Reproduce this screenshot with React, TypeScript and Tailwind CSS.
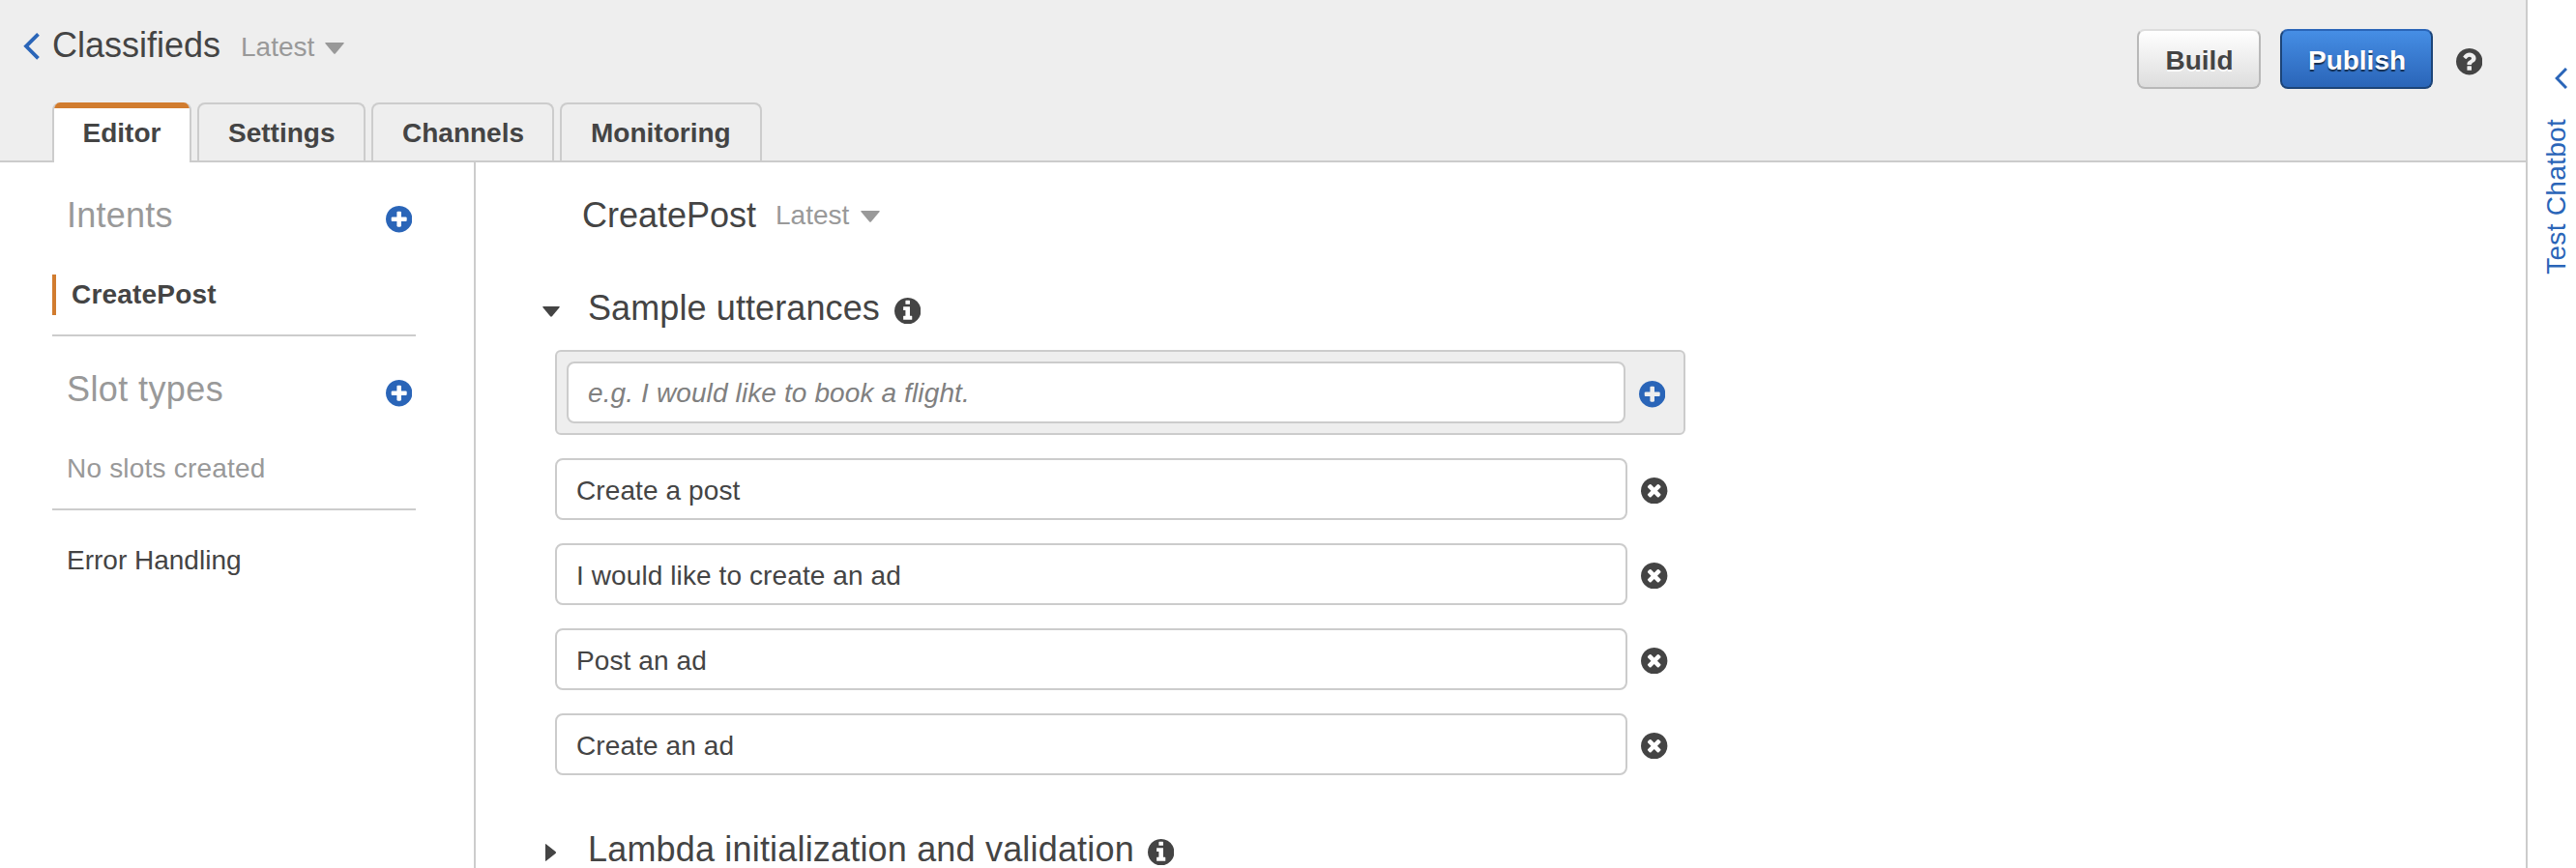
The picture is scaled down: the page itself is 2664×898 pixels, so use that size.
import React from "react";

const RING =
  "q0 209-103 385.5t-279.5 279.5-385.5 103-385.5-103-279.5-279.5-103-385.5 103-385.5 279.5-279.5 385.5-103 385.5 103 279.5 279.5 103 385.5z";

const GLYPHS = {
  plus:
    "M1344 960v-128q0-26-19-45t-45-19h-256v-256q0-26-19-45t-45-19h-128q-26 0-45 19t-19 45v256h-256q-26 0-45 19t-19 45v128q0 26 19 45t45 19h256v256q0 26 19 45t45 19h128q26 0 45-19t19-45v-256h256q26 0 45-19t19-45zm320-64" +
    RING,
  times:
    "M1277 1122q0-26-19-45l-181-181 181-181q19-19 19-45 0-27-19-46l-90-90q-19-19-46-19-26 0-45 19l-181 181-181-181q-19-19-45-19-27 0-46 19l-90 90q-19 19-19 46 0 26 19 45l181 181-181 181q-19 19-19 45 0 27 19 46l90 90q19 19 46 19 26 0 45-19l181-181 181 181q19 19 45 19 27 0 46-19l90-90q19-19 19-46zm387-226" +
    RING,
  info:
    "M1152 1376v-160q0-14-9-23t-23-9h-96v-512q0-14-9-23t-23-9h-320q-14 0-23 9t-9 23v160q0 14 9 23t23 9h96v320h-96q-14 0-23 9t-9 23v160q0 14 9 23t23 9h448q14 0 23-9t9-23zm-128-896v-160q0-14-9-23t-23-9h-192q-14 0-23 9t-9 23v160q0 14 9 23t23 9h192q14 0 23-9t9-23zm640 416" +
    RING,
  question:
    "M1024 1376v-192q0-14-9-23t-23-9h-192q-14 0-23 9t-9 23v192q0 14 9 23t23 9h192q14 0 23-9t9-23zm256-672q0-88-55.5-163t-138.5-116-170-41q-243 0-371 213-15 24 8 42l132 100q7 6 19 6 16 0 25-12 53-68 86-92 34-24 86-24 48 0 85.5 26t37.5 59q0 38-20 61t-68 45q-63 28-115.5 86.5t-52.5 125.5v36q0 14 9 23t23 9h192q14 0 23-9t9-23q0-19 21.5-49.5t54.5-49.5q32-18 49-28.5t46-35 44.5-48 28-60.5 12.5-81zm384 192" +
    RING,
};

function CircleIcon({ name, className }: { name: keyof typeof GLYPHS; className: string }) {
  return (
    <svg viewBox="128 128 1536 1536" fill="currentColor" className={`size-[27.4px] shrink-0 ${className}`}>
      <path d={GLYPHS[name]} />
    </svg>
  );
}

function CaretDown({ className }: { className: string }) {
  return (
    <svg viewBox="0 0 20 12" fill="currentColor" preserveAspectRatio="none" className={`shrink-0 ${className}`}>
      <path d="M1 0h18q1.3 0 .6 1L11 11.2q-1 1-2 0L.4 1Q-.3 0 1 0z" />
    </svg>
  );
}

function Tab({ label, className }: { label: string; className: string }) {
  return (
    <div
      className={`h-[60px] rounded-t-lg border-2 border-b-0 border-[#ccc] pt-3 text-[28px] leading-[36px] font-bold whitespace-nowrap ${className}`}
    >
      {label}
    </div>
  );
}

const utterances = ["Create a post", "I would like to create an ad", "Post an ad", "Create an ad"];

export default function App() {
  return (
    <div className="flex h-[898px] w-[2664px] overflow-hidden bg-white font-['Liberation_Sans',Arial,sans-serif] text-[28px] text-[#444]">
      <div className="flex w-[2612px] shrink-0 flex-col">
        <header className="flex h-[168px] shrink-0 justify-between bg-[#eee] shadow-[inset_0_-2px_0_#ccc]">
          <div className="flex flex-col justify-between">
            <div className="flex pt-[26px] pl-6">
              <svg viewBox="0 0 17 28" className="mt-2 h-7 w-[17px] text-[#2a65b8]" fill="none" stroke="currentColor" strokeWidth="3.8">
                <path d="M15.5 1.3L3 13.8L15.5 26.3" />
              </svg>
              <h1 className="ml-[13px] w-[195px] text-[36px] leading-[41px] whitespace-nowrap">Classifieds</h1>
              <span className="w-[87px] text-[28px] leading-[45px] text-[#999]">Latest</span>
              <CaretDown className="mt-[17.5px] h-3 w-5 text-[#999]" />
            </div>
            <nav className="flex h-[62px] gap-1.5 pl-[54px]">
              <div className="h-[62px] w-[144px] overflow-hidden rounded-t-lg border-x-2 border-[#ccc] bg-white text-[28px] leading-[36px] font-bold">
                <div className="h-1.5 bg-[#d17c2f]" />
                <div className="pt-2 pl-[29.5px]">Editor</div>
              </div>
              <Tab label="Settings" className="w-[174px] pl-[30px]" />
              <Tab label="Channels" className="w-[189px] pl-[30px]" />
              <Tab label="Monitoring" className="w-[209px] pl-[30px]" />
            </nav>
          </div>
          <div className="flex pt-[30px] pr-[44.6px] font-bold">
            <button className="mr-5 h-[62px] w-[128px] rounded-lg border-2 border-[#b8b8b8] border-t-[#ddd] bg-linear-to-b from-white to-[#ddd] pt-px leading-[57px] [text-shadow:0_2px_0_#fff]">
              <span className="block pt-px pl-px">Build</span>
            </button>
            <button className="mr-6 h-[62px] w-[158px] rounded-lg border-2 border-[#1c4478] border-t-[#2a65b8] bg-linear-to-b from-[#468ee5] to-[#2a65b8] pt-px leading-[57px] text-white [text-shadow:0_2px_1px_#152f50]">
              <span className="block pt-px pl-px">Publish</span>
            </button>
            <CircleIcon name="question" className="mt-[20.3px]" />
          </div>
        </header>

        <div className="flex flex-1">
          <aside className="flex w-[492px] shrink-0 flex-col border-r-2 border-[#ccc] pl-[54px]">
            <section className="h-[180px] w-[376px] border-b-2 border-[#ccc]">
              <div className="flex justify-between pt-[34px] pr-[3.6px] pl-[15px]">
                <h2 className="text-[36px] leading-[41px] tracking-[0.25px] text-[#999]">Intents</h2>
                <CircleIcon name="plus" className="mt-[11.3px] text-[#2a65b8]" />
              </div>
              <div className="mt-[41px] h-[42px] border-l-4 border-[#d17c2f] pl-4 leading-[42px] font-bold tracking-[0.2px]">CreatePost</div>
            </section>
            <section className="h-[180px] w-[376px] border-b-2 border-[#ccc]">
              <div className="flex justify-between pt-[34px] pr-[3.6px] pl-[15px]">
                <h2 className="text-[36px] leading-[41px] tracking-[0.4px] text-[#999]">Slot types</h2>
                <CircleIcon name="plus" className="mt-[11.3px] text-[#2a65b8]" />
              </div>
              <div className="mt-[41px] pl-[15px] leading-[42px] tracking-[0.2px] text-[#999]">No slots created</div>
            </section>
            <div className="pt-[31px] pl-[15px] leading-[42px]">Error Handling</div>
          </aside>

          <main className="flex flex-1 flex-col">
            <div className="flex h-[86px] pt-[34px] pl-[110px]">
              <h2 className="w-[200px] text-[36px] leading-[41px] whitespace-nowrap">CreatePost</h2>
              <span className="w-[88px] leading-[41px] text-[#999]">Latest</span>
              <CaretDown className="mt-[15.5px] h-3 w-5 text-[#999]" />
            </div>
            <div className="flex h-[108px] pt-[44px] pl-[69px]">
              <CaretDown className="mt-[18.5px] h-[11px] w-[18px]" />
              <h3 className="ml-[29px] w-[317px] text-[36px] leading-[41px] tracking-[0.1px] whitespace-nowrap">Sample utterances</h3>
              <CircleIcon name="info" className="mt-[10px]" />
            </div>
            <div className="ml-[82px] flex h-[88px] w-[1169px] items-center rounded-md border-2 border-[#ccc] bg-[#eee] pl-[10px]">
              <div className="h-16 w-[1095px] rounded-lg border-2 border-[#ccc] bg-white pl-5 leading-[62px] tracking-[0.12px] text-[#808080] italic">
                e.g. I would like to book a flight.
              </div>
              <CircleIcon name="plus" className="mt-1 ml-[14px] text-[#2a65b8]" />
            </div>
            <ul className="mt-6 flex flex-col gap-6 pl-[82px]">
              {utterances.map((text) => (
                <li key={text} className="flex h-16 items-center">
                  <div className="h-16 w-[1109px] rounded-lg border-2 border-[#ccc] pl-5 leading-[63px] tracking-[0.1px]">{text}</div>
                  <CircleIcon name="times" className="mt-[3.4px] ml-[14.3px]" />
                </li>
              ))}
            </ul>
            <div className="mt-[56px] flex h-10 shrink-0 pl-[72px]">
              <svg viewBox="0 0 11 18" fill="currentColor" className="mt-[15px] h-[18px] w-[11px]">
                <path d="M0 .8Q0-.4 1 .4L10.5 8q1 1 0 2L1 17.6q-1 .8-1-.4z" />
              </svg>
              <h3 className="ml-[33px] w-[579px] text-[36px] leading-[41px] tracking-[0.18px] whitespace-nowrap">
                Lambda initialization and validation
              </h3>
              <CircleIcon name="info" className="mt-[10px]" />
            </div>
          </main>
        </div>
      </div>

      <aside className="flex w-[52px] shrink-0 flex-col border-l-2 border-[#ccc] pt-[70px] text-[#2a65b8]">
        <svg viewBox="0 0 13 22" fill="none" stroke="currentColor" strokeWidth="3" className="ml-7 h-[22px] w-[13px]">
          <path d="M12 1L2.2 11L12 21" />
        </svg>
        <div className="mt-[31px] ml-[14px] rotate-180 leading-8 tracking-[0.3px] whitespace-nowrap [writing-mode:vertical-rl]">
          Test Chatbot
        </div>
      </aside>
    </div>
  );
}
